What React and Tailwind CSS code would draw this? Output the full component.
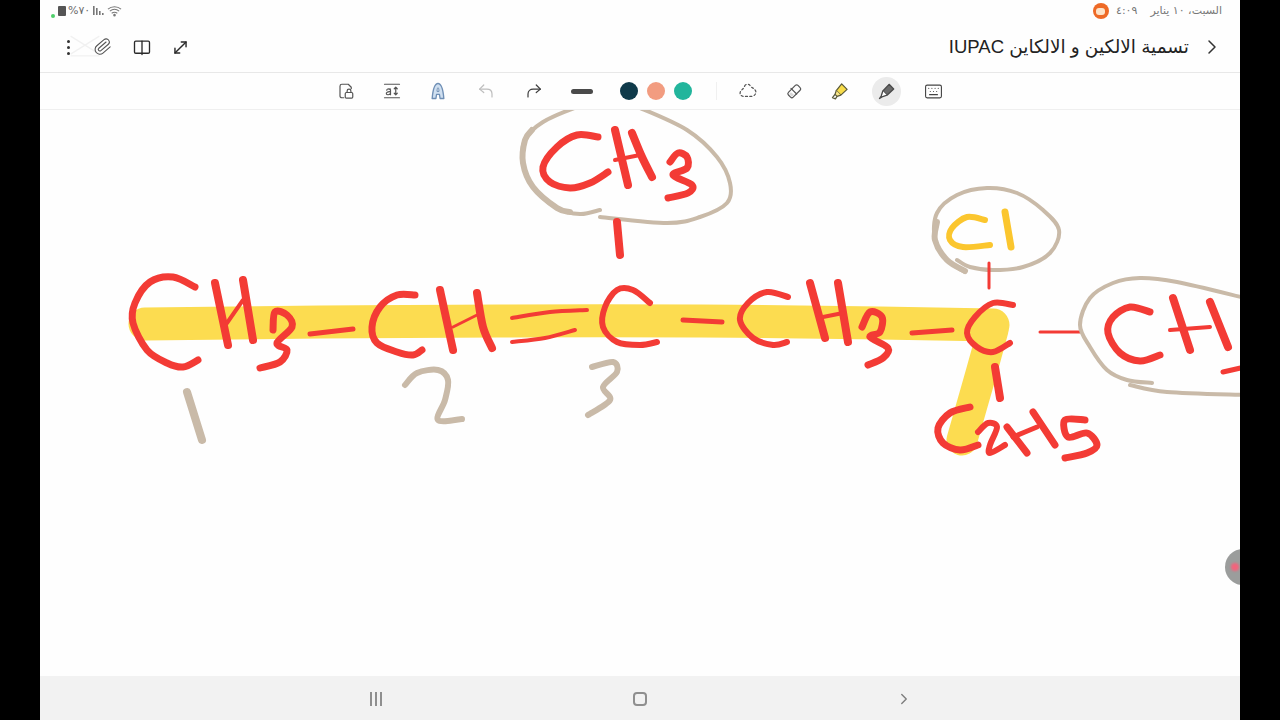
import React from "react";
import { Paperclip, MoveDiagonal, ChevronRight, Keyboard } from "lucide-react";

const RED = "#f33b35";
const TAN = "#c9baa8";
const YELLOW = "#fcdc50";
const AMBER = "#fbc62e";

// freehand ink, points are in page pixels
const ink = [
  // highlighter
  { c: YELLOW, w: 33, p: [[145, 324], [320, 322], [500, 321], [700, 321], [880, 323], [993, 325]] },
  { c: YELLOW, w: 31, p: [[993, 330], [982, 370], [972, 405], [962, 440]] },

  // main chain
  { c: RED, w: 7, p: [[195, 287], [173, 277], [150, 282], [135, 303], [133, 323], [147, 350], [167, 363], [183, 367], [198, 360]] },
  { c: RED, w: 8, p: [[215, 283], [228, 345]] },
  { c: RED, w: 8, p: [[243, 280], [253, 340]] },
  { c: RED, w: 4, p: [[227, 323], [243, 300]] },
  { c: RED, w: 7, p: [[273, 330], [275, 312], [287, 315], [292, 327], [277, 343], [287, 350], [280, 362], [260, 368]] },
  { c: RED, w: 5, p: [[310, 334], [353, 329]] },
  { c: RED, w: 7, p: [[415, 295], [397, 295], [380, 307], [372, 327], [377, 343], [397, 352], [413, 355], [422, 350]] },
  { c: RED, w: 8, p: [[440, 290], [453, 350]] },
  { c: RED, w: 8, p: [[477, 293], [483, 327], [492, 348]] },
  { c: RED, w: 3, p: [[453, 327], [477, 315]] },
  { c: RED, w: 4, p: [[512, 318], [550, 312], [587, 310]] },
  { c: RED, w: 4, p: [[512, 342], [545, 338], [575, 330]] },
  { c: RED, w: 6, p: [[650, 303], [633, 290], [617, 290], [605, 307], [603, 327], [617, 342], [640, 345], [657, 342]] },
  { c: RED, w: 5, p: [[683, 320], [722, 322]] },
  { c: RED, w: 6, p: [[788, 297], [767, 292], [748, 303], [740, 320], [753, 338], [773, 345], [787, 342]] },
  { c: RED, w: 8, p: [[810, 283], [825, 338]] },
  { c: RED, w: 8, p: [[838, 283], [848, 342]] },
  { c: RED, w: 4, p: [[823, 317], [843, 313]] },
  { c: RED, w: 7, p: [[862, 327], [870, 312], [882, 317], [880, 332], [870, 337], [888, 348], [883, 358], [868, 365]] },
  { c: RED, w: 5, p: [[912, 333], [952, 330]] },
  { c: RED, w: 6, p: [[1013, 305], [993, 303], [975, 317], [967, 333], [977, 347], [993, 352], [1010, 343]] },
  { c: RED, w: 3, p: [[1040, 332], [1080, 332]] },

  // top branch
  { c: TAN, w: 4, p: [[600, 210], [580, 214], [557, 208], [533, 187], [523, 163], [525, 140], [543, 122], [580, 106], [610, 98], [640, 108], [687, 130], [717, 157], [730, 183], [727, 203], [700, 217], [667, 223], [600, 217]] },
  { c: TAN, w: 6, p: [[570, 212], [557, 208], [533, 187], [523, 163], [525, 140], [532, 130]] },
  { c: RED, w: 7, p: [[598, 137], [577, 135], [557, 147], [543, 167], [550, 182], [570, 188], [590, 183], [608, 172]] },
  { c: RED, w: 8, p: [[615, 130], [628, 185]] },
  { c: RED, w: 8, p: [[632, 133], [642, 157], [652, 177]] },
  { c: RED, w: 4, p: [[615, 160], [640, 155]] },
  { c: RED, w: 7, p: [[670, 162], [678, 153], [687, 157], [687, 168], [673, 175], [692, 185], [688, 193], [668, 198]] },
  { c: RED, w: 8, p: [[617, 222], [620, 255]] },

  // Cl branch
  { c: TAN, w: 4, p: [[965, 272], [947, 260], [935, 240], [937, 213], [957, 195], [987, 188], [1017, 193], [1043, 210], [1059, 230], [1050, 253], [1023, 267], [993, 270], [970, 267], [957, 260]] },
  { c: TAN, w: 6, p: [[965, 271], [947, 260], [935, 240], [937, 222]] },
  { c: AMBER, w: 6, p: [[985, 220], [967, 217], [952, 228], [950, 240], [963, 247], [990, 245]] },
  { c: AMBER, w: 7, p: [[1005, 212], [1011, 247]] },
  { c: RED, w: 3, p: [[989, 263], [989, 288]] },

  // right branch
  { c: TAN, w: 4, p: [[1152, 383], [1127, 380], [1107, 370], [1090, 347], [1080, 325], [1090, 298], [1113, 283], [1140, 278], [1177, 282], [1245, 298]] },
  { c: TAN, w: 4, p: [[1130, 385], [1167, 392], [1245, 395]] },
  { c: RED, w: 7, p: [[1150, 312], [1130, 307], [1113, 317], [1108, 333], [1120, 353], [1140, 361], [1160, 355]] },
  { c: RED, w: 8, p: [[1173, 298], [1190, 350]] },
  { c: RED, w: 8, p: [[1210, 302], [1228, 347]] },
  { c: RED, w: 4, p: [[1170, 330], [1210, 327]] },
  { c: RED, w: 5, p: [[1223, 372], [1245, 367]] },

  // C2H5 branch
  { c: RED, w: 8, p: [[995, 367], [1000, 398]] },
  { c: RED, w: 7, p: [[970, 407], [950, 413], [938, 428], [943, 443], [960, 450], [978, 445]] },
  { c: RED, w: 6, p: [[978, 432], [988, 423], [997, 427], [990, 445], [990, 453], [1005, 445]] },
  { c: RED, w: 7, p: [[1007, 427], [1027, 453]] },
  { c: RED, w: 7, p: [[1033, 412], [1055, 445]] },
  { c: RED, w: 5, p: [[1013, 437], [1037, 427]] },
  { c: RED, w: 7, p: [[1085, 420], [1065, 420], [1068, 437], [1087, 433], [1097, 445], [1087, 453], [1065, 458]] },

  // carbon numbers
  { c: TAN, w: 8, p: [[187, 392], [202, 440]] },
  { c: TAN, w: 6, p: [[405, 385], [417, 373], [438, 370], [448, 380], [445, 400], [438, 420], [462, 419]] },
  { c: TAN, w: 6, p: [[592, 367], [613, 362], [617, 372], [603, 387], [610, 400], [588, 415]] },
];

// catmull-rom through the points
const smooth = (p) => {
  let d = "M" + p[0][0] + " " + p[0][1];
  for (let i = 0; i < p.length - 1; i++) {
    const a = p[i - 1] || p[i];
    const b = p[i];
    const c = p[i + 1];
    const e = p[i + 2] || c;
    const c1x = b[0] + (c[0] - a[0]) / 6;
    const c1y = b[1] + (c[1] - a[1]) / 6;
    const c2x = c[0] - (e[0] - b[0]) / 6;
    const c2y = c[1] - (e[1] - b[1]) / 6;
    d += " C" + c1x + " " + c1y + " " + c2x + " " + c2y + " " + c[0] + " " + c[1];
  }
  return d;
};

const Ico = ({ children, className = "" }) => (
  <svg viewBox="0 0 24 24" fill="none" stroke="currentColor" strokeWidth="1.6" strokeLinecap="round" strokeLinejoin="round" className={className}>
    {children}
  </svg>
);

const StatusBar = () => (
  <div className="h-[22px] flex items-center justify-between pl-[11px] pr-[18px]">
    <div className="flex items-center text-[#6b6b6b]">
      <span className="w-[4px] h-[4px] rounded-full bg-[#4fd06a] mt-[9px]" />
      <span className="w-[8px] h-[10px] bg-[#555] rounded-[1px] ml-[3px] mb-[1px]" />
      <span className="text-[11px] ml-[2px] w-[23px] whitespace-nowrap font-['DejaVu_Sans',sans-serif]">%٧٠</span>
      <svg viewBox="0 0 12 12" className="w-[12px] h-[12px] ml-[2px]" fill="#777">
        <rect x="0" y="1" width="1.6" height="9" />
        <rect x="3" y="3" width="1.6" height="7" />
        <rect x="6" y="6" width="1.6" height="4" />
        <rect x="9" y="8" width="1.6" height="2" />
      </svg>
      <svg viewBox="0 0 16 12" className="w-[15px] h-[12px] ml-[2px]" fill="none" stroke="#777" strokeWidth="1.1">
        <path d="M1 4C5 0.5 11 0.5 15 4" />
        <path d="M3 6.2C6 3.8 10 3.8 13 6.2" />
        <path d="M5 8.4C7 7 9 7 11 8.4" />
        <circle cx="8" cy="10.4" r="0.8" fill="#777" />
      </svg>
    </div>
    <div className="flex items-center gap-[7px] text-[11px] text-[#777] font-['DejaVu_Sans',sans-serif]">
      <span className="w-[16px] h-[16px] rounded-full bg-[#ee6a26] flex items-center justify-center">
        <span className="w-[9px] h-[7px] rounded-[3px] bg-[#fde3c8]" />
      </span>
      <span dir="rtl">٤:٠٩</span>
      <span dir="rtl" className="ml-[6px]">السبت، ١٠ يناير</span>
    </div>
  </div>
);

const Header = () => (
  <div className="h-[51px] border-b border-[#e8e8e8] flex items-center justify-between pl-[27px] pr-[16px] text-[#2a2a2a]">
    <div className="flex items-center">
      <span className="flex flex-col gap-[3px]">
        <span className="w-[3px] h-[3px] rounded-full bg-[#333]" />
        <span className="w-[3px] h-[3px] rounded-full bg-[#333]" />
        <span className="w-[3px] h-[3px] rounded-full bg-[#333]" />
      </span>
      <span className="relative ml-[23px] w-[20px] h-[20px]">
        <svg viewBox="0 0 40 30" className="absolute -left-[26px] -top-[6px] w-[36px] h-[30px]" fill="none" stroke="#f1f1f1" strokeWidth="1.5">
          <path d="M4 4L36 24M36 4L4 24M4 26H36" />
        </svg>
        <Paperclip size={19} strokeWidth={1.4} className="relative text-[#555] rotate-[5deg]" />
      </span>
      <Ico className="ml-[19px] w-[20px] h-[20px]">
        <path d="M12 5H4.5A1.5 1.5 0 0 0 3 6.5V18A1.5 1.5 0 0 0 4.5 19.5H19.5A1.5 1.5 0 0 0 21 18V6.5A1.5 1.5 0 0 0 19.5 5Z" />
        <path d="M12 5V21" />
      </Ico>
      <MoveDiagonal size={19} strokeWidth={1.8} className="ml-[19px]" />
    </div>
    <div className="flex items-center">
      <span dir="rtl" className="text-[18.5px] font-['Liberation_Sans','DejaVu_Sans',sans-serif] text-[#222] whitespace-nowrap">
        تسمية الالكين و الالكاين IUPAC
      </span>
      <ChevronRight size={24} strokeWidth={1.5} className="ml-[11px] text-[#333]" />
    </div>
  </div>
);

const Toolbar = () => (
  <div className="h-[37px] border-b border-[#efefef] flex items-center justify-center text-[#555]">
    <Ico className="w-[18px] h-[18px]">
      <path d="M9 21H6.5A2.5 2.5 0 0 1 4 18.5V5.5A2.5 2.5 0 0 1 6.5 3H15L19 7V9" />
      <rect x="11" y="14" width="10" height="7.5" rx="1.5" />
      <path d="M13.5 14V12A2.5 2.5 0 0 1 18.5 12V14" />
    </Ico>
    <Ico className="ml-[28px] w-[18px] h-[18px]">
      <path d="M2 3H22M2 21H22" />
      <path d="M10 9.5C7 8.5 5 9.5 5 11M10 17V11C10 10 9 9.5 8 9.5M10 13C6 12.5 4 14 4.5 15.8C5 17.5 9 17.5 10 15" />
      <path d="M17 7V17M15 9L17 7L19 9M15 15L17 17L19 15" />
    </Ico>
    <svg viewBox="0 0 24 24" className="ml-[27px] w-[20px] h-[20px]" fill="none" strokeLinejoin="round">
      <path d="M12 3C8 3 6 9 5 21H9.5L10.3 16H13.7L14.5 21H19C18 9 16 3 12 3Z" fill="#cfdff0" stroke="#6f8fb5" strokeWidth="1.6" />
      <path d="M10.8 12.5C11 9.5 11.4 8 12 8C12.6 8 13 9.5 13.2 12.5Z" fill="#fff" stroke="#6f8fb5" strokeWidth="1.2" />
    </svg>
    <Ico className="ml-[29px] w-[18px] h-[18px] text-[#bdbdbd]">
      <path d="M9 4L3.5 9.5L9 14" />
      <path d="M3.5 9.5H13C17 9.5 20 12 20 16V20" />
    </Ico>
    <Ico className="ml-[30px] w-[18px] h-[18px] text-[#3c3c3c]">
      <path d="M15 4L20.5 9.5L15 14" />
      <path d="M20.5 9.5H11C7 9.5 4 12 4 16V20" />
    </Ico>
    <span className="ml-[28px] w-[22px] h-[5px] rounded-full bg-[#4a4a4a]" />
    <span className="ml-[27px] w-[18px] h-[18px] rounded-full bg-[#0f3a4a]" />
    <span className="ml-[9px] w-[18px] h-[18px] rounded-full bg-[#f29c80]" />
    <span className="ml-[9px] w-[18px] h-[18px] rounded-full bg-[#22b59c]" />
    <span className="ml-[24px] w-px h-[18px] bg-[#f0f0f0]" />
    <Ico className="ml-[21px] w-[20px] h-[20px]">
      <path strokeDasharray="2.4 2.8" strokeWidth="1.5" d="M8 6C9 3.5 13 3 14.5 5.5C16 8.5 19 8 21 11.5C22.5 15 20 18 16 18.5H7C3.5 18.5 1.5 15.5 3 12.5C4 10.5 7 9.5 8 6Z" />
    </Ico>
    <Ico className="ml-[27px] w-[18px] h-[18px]">
      <rect x="3" y="8" width="18" height="9" rx="2.5" transform="rotate(-45 12 12)" />
      <path d="M8 8.5L15.5 16" />
      <path d="M9 19.5L5.5 16L8 13.5L12 17Z" fill="#d8d8d8" stroke="none" />
    </Ico>
    <svg viewBox="0 0 24 24" className="ml-[27px] w-[20px] h-[20px]" fill="none" stroke="#5a5a3a" strokeWidth="1.5" strokeLinejoin="round">
      <path d="M14 3.5L20.5 10L13 17L7.5 11.5Z" fill="#f8dc4a" />
      <path d="M7.5 11.5L6 16L8.5 18.5L13 17" fill="#f8e68a" />
      <path d="M6 16L3 20L6.5 21.5L8.5 18.5" />
    </svg>
    <span className="ml-[22px] w-[29px] h-[29px] rounded-full bg-[#ebebeb] flex items-center justify-center">
      <svg viewBox="0 0 24 24" className="w-[20px] h-[20px]" fill="none" stroke="#4a4a4a" strokeWidth="1.6" strokeLinejoin="round">
        <path d="M14.5 4L20 9.5L12 17L7 12Z" fill="#6a6a6a" />
        <path d="M7 12L5 18L3 21L6 19L12 17" fill="#fff" />
      </svg>
    </span>
    <Keyboard size={19} strokeWidth={1.4} className="ml-[23px] text-[#444]" />
  </div>
);

const NavBar = () => (
  <div className="h-[44px] pt-[2px] bg-[#f2f2f2] flex items-center justify-center gap-[250px] text-[#7d7d7d]">
    <span className="w-[14px] flex justify-center gap-[3px]">
      <span className="w-[2px] h-[14px] bg-[#8f8f8f]" />
      <span className="w-[2px] h-[14px] bg-[#8f8f8f]" />
      <span className="w-[2px] h-[14px] bg-[#8f8f8f]" />
    </span>
    <span className="w-[14px] h-[14px] border-2 border-[#8f8f8f] rounded-[4px]" />
    <span className="w-[14px] flex justify-center">
      <ChevronRight size={18} strokeWidth={1.8} className="shrink-0" />
    </span>
  </div>
);

const App = () => {
  return (
    <div className="w-[1280px] h-[720px] bg-black flex justify-center overflow-hidden">
      <div className="w-[1200px] h-full bg-[#fefefe] flex flex-col">
        <StatusBar />
        <Header />
        <Toolbar />
        <div className="flex-1 relative overflow-hidden">
          <svg viewBox="40 110 1200 566" className="block w-full h-full" fill="none" strokeLinecap="round" strokeLinejoin="round">
            {ink.map((s, i) => (
              <path key={i} d={smooth(s.p)} stroke={s.c} strokeWidth={s.w} />
            ))}
          </svg>
          <div className="absolute left-[1185px] top-[439px] w-[36px] h-[36px] rounded-full bg-[#9b9d9c] flex items-center">
            <span className="ml-[6px] w-[8px] h-[8px] rounded-full bg-[#f2647c] blur-[1px]" />
          </div>
        </div>
        <NavBar />
      </div>
    </div>
  );
};

export default App;
